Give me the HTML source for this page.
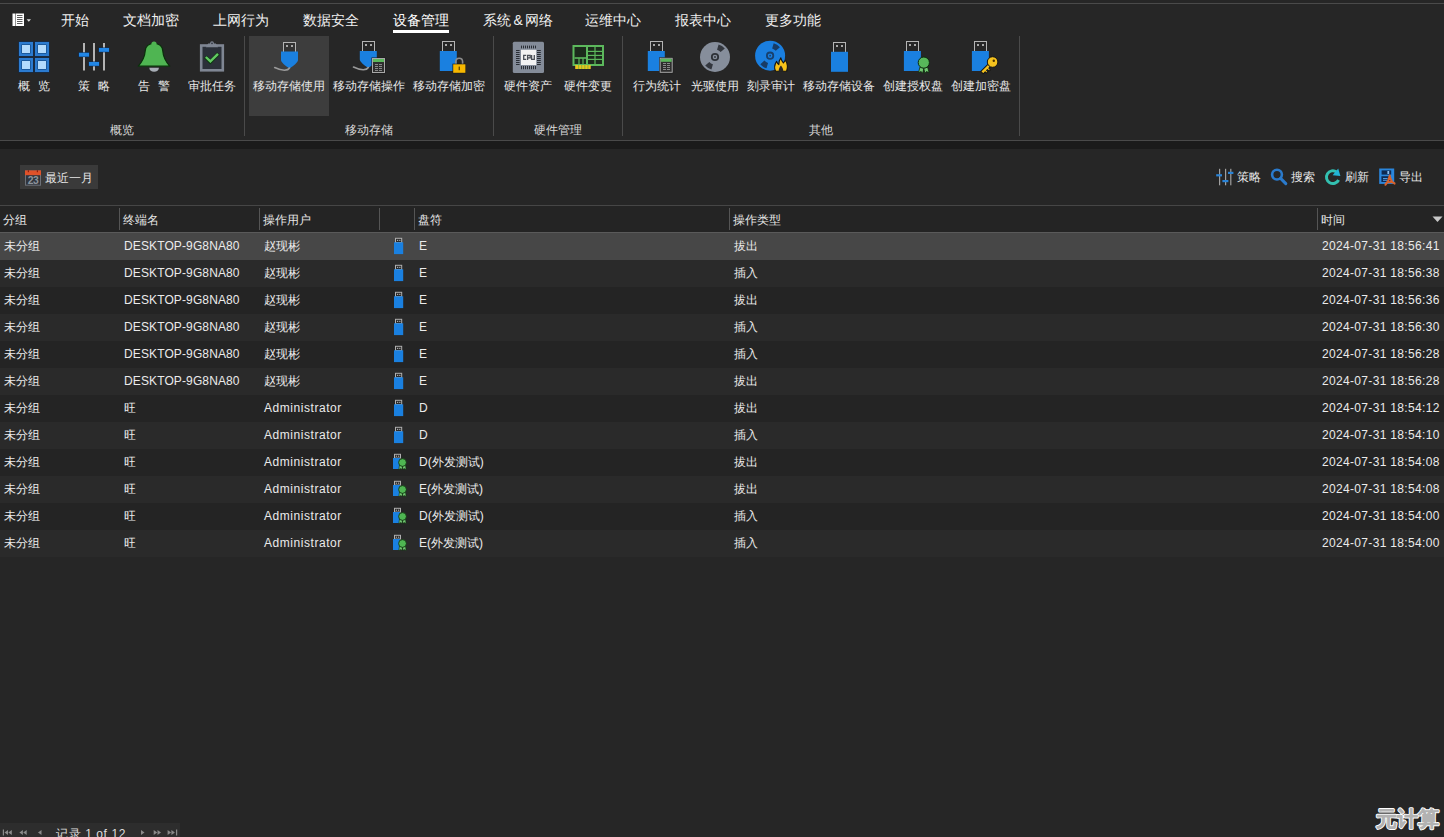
<!DOCTYPE html>
<html><head><meta charset="utf-8">
<style>
*{margin:0;padding:0;box-sizing:border-box}
html,body{width:1444px;height:837px;overflow:hidden;background:#262626}
body{position:relative;font-family:"Liberation Sans",sans-serif;color:#e6e6e6;font-size:12px}
.a{position:absolute}
.t{position:absolute;white-space:nowrap;line-height:16px;font-size:12px}
.tab{position:absolute;white-space:nowrap;line-height:16px;font-size:14px;top:12px;color:#f0f0f0}
.lbl{position:absolute;white-space:nowrap;line-height:16px;font-size:12px;top:78px;color:#e8e8e8}
.grp{position:absolute;white-space:nowrap;line-height:16px;font-size:12px;top:122px;color:#d8d8d8}
.vsep{position:absolute;top:36px;height:100px;width:1px;background:#4a4a4a}
.hsep{position:absolute;top:208px;height:22px;width:1px;background:#555}
.row{position:absolute;left:0;width:1444px;height:27px}
.row .t{top:5px;color:#ebebeb}
svg{position:absolute;overflow:visible}
</style></head><body>
<!-- top strip -->
<div class="a" style="left:0;top:3px;width:1444px;height:1px;background:#4a4a4a"></div>

<!-- app menu icon -->
<svg style="left:12px;top:13px" width="20" height="14" viewBox="0 0 20 14">
<rect x="0.5" y="0.5" width="2.5" height="12.5" fill="#fff"/>
<rect x="3.5" y="0.5" width="8.5" height="12.5" fill="#fff"/>
<rect x="5" y="2.2" width="5.5" height="0.8" fill="#333"/>
<rect x="5" y="4.2" width="5.5" height="0.8" fill="#333"/>
<rect x="5" y="6.2" width="5.5" height="0.8" fill="#333"/>
<rect x="5" y="8.2" width="5.5" height="0.8" fill="#333"/>
<rect x="5" y="10.2" width="5.5" height="0.8" fill="#333"/>
<path d="M14.6 6.2 L19 6.2 L16.8 8.8 Z" fill="#ddd"/>
</svg>

<!-- tabs -->
<div class="tab" style="left:61px">开始</div>
<div class="tab" style="left:123px">文档加密</div>
<div class="tab" style="left:213px">上网行为</div>
<div class="tab" style="left:303px">数据安全</div>
<div class="tab" style="left:393px;color:#fff">设备管理</div>
<div class="a" style="left:393px;top:30px;width:56px;height:3px;background:#fff"></div>
<div class="tab" style="left:483px">系统<span style="margin:0 2px 0 2.5px">&amp;</span>网络</div>
<div class="tab" style="left:585px">运维中心</div>
<div class="tab" style="left:675px">报表中心</div>
<div class="tab" style="left:765px">更多功能</div>

<!-- ribbon -->
<div class="a" style="left:249px;top:36px;width:80px;height:80px;background:#3d3d3d"></div>
<div class="vsep" style="left:244px"></div>
<div class="vsep" style="left:493px"></div>
<div class="vsep" style="left:622px"></div>
<div class="vsep" style="left:1019px"></div>

<div class="lbl" style="left:18px">概</div><div class="lbl" style="left:38px">览</div>
<div class="lbl" style="left:78px">策</div><div class="lbl" style="left:98px">略</div>
<div class="lbl" style="left:138px">告</div><div class="lbl" style="left:158px">警</div>
<div class="lbl" style="left:188px">审批任务</div>
<div class="lbl" style="left:253px">移动存储使用</div>
<div class="lbl" style="left:333px">移动存储操作</div>
<div class="lbl" style="left:413px">移动存储加密</div>
<div class="lbl" style="left:504px">硬件资产</div>
<div class="lbl" style="left:564px">硬件变更</div>
<div class="lbl" style="left:633px">行为统计</div>
<div class="lbl" style="left:691px">光驱使用</div>
<div class="lbl" style="left:747px">刻录审计</div>
<div class="lbl" style="left:803px">移动存储设备</div>
<div class="lbl" style="left:883px">创建授权盘</div>
<div class="lbl" style="left:951px">创建加密盘</div>

<div class="grp" style="left:110px">概览</div>
<div class="grp" style="left:345px">移动存储</div>
<div class="grp" style="left:534px">硬件管理</div>
<div class="grp" style="left:809px">其他</div>

<!-- ICONS -->

<!-- ribbon bottom -->
<div class="a" style="left:0;top:140px;width:1444px;height:1px;background:#4a4a4a"></div>
<div class="a" style="left:0;top:141px;width:1444px;height:8px;background:#1b1b1b"></div>

<!-- toolbar -->
<div class="a" style="left:20px;top:165px;width:78px;height:24px;background:#3a3a3a"></div>
<div class="t" style="left:45px;top:170px">最近一月</div>
<div class="t" style="left:1237px;top:169px">策略</div>
<div class="t" style="left:1291px;top:169px">搜索</div>
<div class="t" style="left:1345px;top:169px">刷新</div>
<div class="t" style="left:1399px;top:169px">导出</div>

<!-- table header -->
<div class="a" style="left:0;top:205px;width:1444px;height:1px;background:#464646"></div>
<div class="a" style="left:0;top:206px;width:1444px;height:26px;background:#242424"></div>
<div class="a" style="left:0;top:232px;width:1444px;height:1px;background:#5a5a5a"></div>
<div class="hsep" style="left:119px"></div>
<div class="hsep" style="left:259px"></div>
<div class="hsep" style="left:379px"></div>
<div class="hsep" style="left:414px"></div>
<div class="hsep" style="left:729px"></div>
<div class="hsep" style="left:1317px"></div>
<div class="t" style="left:3px;top:212px">分组</div>
<div class="t" style="left:123px;top:212px">终端名</div>
<div class="t" style="left:263px;top:212px">操作用户</div>
<div class="t" style="left:418px;top:212px">盘符</div>
<div class="t" style="left:733px;top:212px">操作类型</div>
<div class="t" style="left:1321px;top:212px">时间</div>
<svg style="left:1432px;top:216px" width="11" height="7"><path d="M0.5 0.5 L10.5 0.5 L5.5 6 Z" fill="#c8c8c8"/></svg>

<div class="row" style="top:233px;background:#474747"><div class="t" style="left:4px">未分组</div><div class="t" style="left:124px;letter-spacing:0.12px">DESKTOP-9G8NA80</div><div class="t" style="left:264px">赵现彬</div><i class="ru"></i><div class="t" style="left:419px">E</div><div class="t" style="left:734px">拔出</div><div class="t" style="left:1322px;letter-spacing:0.33px">2024-07-31 18:56:41</div></div>
<div class="row" style="top:260px;background:#2a2a2a"><div class="t" style="left:4px">未分组</div><div class="t" style="left:124px;letter-spacing:0.12px">DESKTOP-9G8NA80</div><div class="t" style="left:264px">赵现彬</div><i class="ru"></i><div class="t" style="left:419px">E</div><div class="t" style="left:734px">插入</div><div class="t" style="left:1322px;letter-spacing:0.33px">2024-07-31 18:56:38</div></div>
<div class="row" style="top:287px;background:#242424"><div class="t" style="left:4px">未分组</div><div class="t" style="left:124px;letter-spacing:0.12px">DESKTOP-9G8NA80</div><div class="t" style="left:264px">赵现彬</div><i class="ru"></i><div class="t" style="left:419px">E</div><div class="t" style="left:734px">拔出</div><div class="t" style="left:1322px;letter-spacing:0.33px">2024-07-31 18:56:36</div></div>
<div class="row" style="top:314px;background:#2a2a2a"><div class="t" style="left:4px">未分组</div><div class="t" style="left:124px;letter-spacing:0.12px">DESKTOP-9G8NA80</div><div class="t" style="left:264px">赵现彬</div><i class="ru"></i><div class="t" style="left:419px">E</div><div class="t" style="left:734px">插入</div><div class="t" style="left:1322px;letter-spacing:0.33px">2024-07-31 18:56:30</div></div>
<div class="row" style="top:341px;background:#242424"><div class="t" style="left:4px">未分组</div><div class="t" style="left:124px;letter-spacing:0.12px">DESKTOP-9G8NA80</div><div class="t" style="left:264px">赵现彬</div><i class="ru"></i><div class="t" style="left:419px">E</div><div class="t" style="left:734px">插入</div><div class="t" style="left:1322px;letter-spacing:0.33px">2024-07-31 18:56:28</div></div>
<div class="row" style="top:368px;background:#2a2a2a"><div class="t" style="left:4px">未分组</div><div class="t" style="left:124px;letter-spacing:0.12px">DESKTOP-9G8NA80</div><div class="t" style="left:264px">赵现彬</div><i class="ru"></i><div class="t" style="left:419px">E</div><div class="t" style="left:734px">拔出</div><div class="t" style="left:1322px;letter-spacing:0.33px">2024-07-31 18:56:28</div></div>
<div class="row" style="top:395px;background:#242424"><div class="t" style="left:4px">未分组</div><div class="t" style="left:124px">旺</div><div class="t" style="left:264px;letter-spacing:0.55px">Administrator</div><i class="ru"></i><div class="t" style="left:419px">D</div><div class="t" style="left:734px">拔出</div><div class="t" style="left:1322px;letter-spacing:0.33px">2024-07-31 18:54:12</div></div>
<div class="row" style="top:422px;background:#2a2a2a"><div class="t" style="left:4px">未分组</div><div class="t" style="left:124px">旺</div><div class="t" style="left:264px;letter-spacing:0.55px">Administrator</div><i class="ru"></i><div class="t" style="left:419px">D</div><div class="t" style="left:734px">插入</div><div class="t" style="left:1322px;letter-spacing:0.33px">2024-07-31 18:54:10</div></div>
<div class="row" style="top:449px;background:#242424"><div class="t" style="left:4px">未分组</div><div class="t" style="left:124px">旺</div><div class="t" style="left:264px;letter-spacing:0.55px">Administrator</div><i class="rb"></i><div class="t" style="left:419px">D(外发测试)</div><div class="t" style="left:734px">拔出</div><div class="t" style="left:1322px;letter-spacing:0.33px">2024-07-31 18:54:08</div></div>
<div class="row" style="top:476px;background:#2a2a2a"><div class="t" style="left:4px">未分组</div><div class="t" style="left:124px">旺</div><div class="t" style="left:264px;letter-spacing:0.55px">Administrator</div><i class="rb"></i><div class="t" style="left:419px">E(外发测试)</div><div class="t" style="left:734px">拔出</div><div class="t" style="left:1322px;letter-spacing:0.33px">2024-07-31 18:54:08</div></div>
<div class="row" style="top:503px;background:#242424"><div class="t" style="left:4px">未分组</div><div class="t" style="left:124px">旺</div><div class="t" style="left:264px;letter-spacing:0.55px">Administrator</div><i class="rb"></i><div class="t" style="left:419px">D(外发测试)</div><div class="t" style="left:734px">插入</div><div class="t" style="left:1322px;letter-spacing:0.33px">2024-07-31 18:54:00</div></div>
<div class="row" style="top:530px;background:#2a2a2a"><div class="t" style="left:4px">未分组</div><div class="t" style="left:124px">旺</div><div class="t" style="left:264px;letter-spacing:0.55px">Administrator</div><i class="rb"></i><div class="t" style="left:419px">E(外发测试)</div><div class="t" style="left:734px">插入</div><div class="t" style="left:1322px;letter-spacing:0.33px">2024-07-31 18:54:00</div></div>

<!-- pager -->
<div class="a" style="left:0;top:823px;width:180px;height:14px;background:#2d2d2d"></div>
<div class="t" style="left:56px;top:826px;color:#ddd;letter-spacing:0.6px">记录 1 of 12</div>

<svg style="left:0;top:0" width="1444" height="837" viewBox="0 0 1444 837"><rect x="18.5" y="41.5" width="15" height="15" fill="#0b2f5c"/><rect x="19" y="42" width="14" height="14" fill="#2b7bd0"/><rect x="21.5" y="44.5" width="9" height="9" fill="#0d3a6c"/><rect x="22" y="45" width="8" height="8" fill="#b3dbfd"/><rect x="18.5" y="57.5" width="15" height="15" fill="#0b2f5c"/><rect x="19" y="58" width="14" height="14" fill="#2b7bd0"/><rect x="21.5" y="60.5" width="9" height="9" fill="#0d3a6c"/><rect x="22" y="61" width="8" height="8" fill="#b3dbfd"/><rect x="34.5" y="41.5" width="15" height="15" fill="#0b2f5c"/><rect x="35" y="42" width="14" height="14" fill="#2b7bd0"/><rect x="37.5" y="44.5" width="9" height="9" fill="#0d3a6c"/><rect x="38" y="45" width="8" height="8" fill="#b3dbfd"/><rect x="34.5" y="57.5" width="15" height="15" fill="#0b2f5c"/><rect x="35" y="58" width="14" height="14" fill="#2b7bd0"/><rect x="37.5" y="60.5" width="9" height="9" fill="#0d3a6c"/><rect x="38" y="61" width="8" height="8" fill="#b3dbfd"/><rect x="83" y="43" width="2" height="27.5" fill="#b4b4b4"/><rect x="93" y="43" width="2" height="27.5" fill="#b4b4b4"/><rect x="103" y="43" width="2" height="27.5" fill="#b4b4b4"/><rect x="78.5" y="52.3" width="11" height="4.8" fill="#0b2f5c"/><rect x="79" y="52.8" width="10" height="3.8" fill="#2186e6"/><rect x="88.5" y="61.5" width="11" height="4.8" fill="#0b2f5c"/><rect x="89" y="62" width="10" height="3.8" fill="#2186e6"/><rect x="98.5" y="47.5" width="11" height="4.8" fill="#0b2f5c"/><rect x="99" y="48" width="10" height="3.8" fill="#2186e6"/><path d="M138.3 66.2 C141.5 62.4 144.8 58 145.2 51 C145.6 46 149 43.5 154 43.5 C159 43.5 162.4 46 162.8 51 C163.2 58 166.5 62.4 169.7 66.2 Z" fill="#4fb552" stroke="#0a300b" stroke-width="1.2" stroke-linejoin="round"/><circle cx="154" cy="44" r="2.6" fill="#4fb552"/><path d="M149.3 67.8 H158.9 C158.9 70.3 156.8 71.8 154.1 71.8 C151.4 71.8 149.3 70.3 149.3 67.8 Z" fill="#a7adb5"/><rect x="201.2" y="45.5" width="21.6" height="24.8" fill="#2b3039" stroke="#7f8693" stroke-width="2.6"/><path d="M205.8 47.2 L208.2 43.6 H215.8 L218.2 47.2 Z" fill="#7f8693"/><circle cx="212" cy="43.2" r="1.9" fill="#7f8693"/><circle cx="212" cy="43.4" r="0.8" fill="#2b3039"/><path d="M205.4 56.8 L210.4 61.8 L218.4 53.6" fill="none" stroke="#0d3a10" stroke-width="3.8"/><path d="M205.8 57 L210.4 61.4 L218 53.8" fill="none" stroke="#62c963" stroke-width="2.4"/><rect x="283.5" y="42.5" width="12" height="10" fill="#333" stroke="#b4b4b4" stroke-width="1"/><rect x="286.0" y="45.0" width="2" height="2" fill="#a8a8a8"/><rect x="291.0" y="45.0" width="2" height="2" fill="#a8a8a8"/><path d="M281 51.5 H298 V60.0 C298 62.5 293 66.0 290.6 67.8 Q289.5 68.5 288.4 67.8 C286 66.0 281 62.5 281 60.0 Z" fill="#1a80e0"/><path d="M289.5 68.0 C288 70.5 283 71.5 274.7 67.5" fill="none" stroke="#9a9a9a" stroke-width="1.6" stroke-linecap="round"/><rect x="362.5" y="41.5" width="12" height="10" fill="#262626" stroke="#b4b4b4" stroke-width="1"/><rect x="365.0" y="44.0" width="2" height="2" fill="#a8a8a8"/><rect x="370.0" y="44.0" width="2" height="2" fill="#a8a8a8"/><path d="M359.8 51 H376.8 V59.5 C376.8 62 371.8 65.5 369.40000000000003 67.3 Q368.3 68 367.2 67.3 C364.8 65.5 359.8 62 359.8 59.5 Z" fill="#1a80e0"/><path d="M368.3 67.5 C366.8 70 361.8 71 353.5 67" fill="none" stroke="#9a9a9a" stroke-width="1.6" stroke-linecap="round"/><rect x="371.5" y="57.5" width="14" height="16" fill="#1a1a1a"/><rect x="372.5" y="58.5" width="12" height="14" fill="#2e2e2e" stroke="#a8a8a8" stroke-width="1"/><rect x="373" y="59" width="11" height="3" fill="#5cb85c"/><rect x="375" y="64" width="3" height="1" fill="#8a8a8a"/><rect x="379" y="64" width="3" height="1" fill="#8a8a8a"/><rect x="375" y="66" width="3" height="1" fill="#8a8a8a"/><rect x="379" y="66" width="3" height="1" fill="#8a8a8a"/><rect x="375" y="68" width="3" height="1" fill="#8a8a8a"/><rect x="379" y="68" width="3" height="1" fill="#8a8a8a"/><rect x="375" y="70" width="3" height="1" fill="#8a8a8a"/><rect x="379" y="70" width="3" height="1" fill="#8a8a8a"/><rect x="442.5" y="41.5" width="12" height="10" fill="#262626" stroke="#b4b4b4" stroke-width="1"/><rect x="445.0" y="44.0" width="2" height="2" fill="#a8a8a8"/><rect x="450.0" y="44.0" width="2" height="2" fill="#a8a8a8"/><rect x="439.8" y="51" width="17" height="20" fill="#1a80e0"/><path d="M455.8 64.5 V61.8 C455.8 59.5 457.2 58.3 459.2 58.3 C461.2 58.3 462.6 59.5 462.6 61.8 V64.5" fill="none" stroke="#8c8c8c" stroke-width="1.6"/><rect x="452.5" y="63.7" width="13.5" height="9.6" fill="#1a1a1a"/><rect x="453.2" y="64.3" width="12.2" height="8.5" fill="#f6b700"/><rect x="458.6" y="66.6" width="1.4" height="3.6" fill="#6a4b00"/><rect x="512.8" y="41.8" width="31.2" height="31.2" rx="1.5" fill="#848c99"/><rect x="521" y="45.6" width="1" height="2.8" fill="#2a2e35"/><rect x="521" y="66" width="1" height="3.2" fill="#2a2e35"/><rect x="516" y="50" width="3.6" height="1" fill="#2a2e35"/><rect x="537" y="50" width="3.8" height="1" fill="#2a2e35"/><rect x="523" y="45.6" width="1" height="2.8" fill="#2a2e35"/><rect x="523" y="66" width="1" height="3.2" fill="#2a2e35"/><rect x="516" y="52" width="3.6" height="1" fill="#2a2e35"/><rect x="537" y="52" width="3.8" height="1" fill="#2a2e35"/><rect x="525" y="45.6" width="1" height="2.8" fill="#2a2e35"/><rect x="525" y="66" width="1" height="3.2" fill="#2a2e35"/><rect x="516" y="54" width="3.6" height="1" fill="#2a2e35"/><rect x="537" y="54" width="3.8" height="1" fill="#2a2e35"/><rect x="527" y="45.6" width="1" height="2.8" fill="#2a2e35"/><rect x="527" y="66" width="1" height="3.2" fill="#2a2e35"/><rect x="516" y="56" width="3.6" height="1" fill="#2a2e35"/><rect x="537" y="56" width="3.8" height="1" fill="#2a2e35"/><rect x="529" y="45.6" width="1" height="2.8" fill="#2a2e35"/><rect x="529" y="66" width="1" height="3.2" fill="#2a2e35"/><rect x="516" y="58" width="3.6" height="1" fill="#2a2e35"/><rect x="537" y="58" width="3.8" height="1" fill="#2a2e35"/><rect x="531" y="45.6" width="1" height="2.8" fill="#2a2e35"/><rect x="531" y="66" width="1" height="3.2" fill="#2a2e35"/><rect x="516" y="60" width="3.6" height="1" fill="#2a2e35"/><rect x="537" y="60" width="3.8" height="1" fill="#2a2e35"/><rect x="533" y="45.6" width="1" height="2.8" fill="#2a2e35"/><rect x="533" y="66" width="1" height="3.2" fill="#2a2e35"/><rect x="516" y="62" width="3.6" height="1" fill="#2a2e35"/><rect x="537" y="62" width="3.8" height="1" fill="#2a2e35"/><rect x="535" y="45.6" width="1" height="2.8" fill="#2a2e35"/><rect x="535" y="66" width="1" height="3.2" fill="#2a2e35"/><rect x="516" y="64" width="3.6" height="1" fill="#2a2e35"/><rect x="537" y="64" width="3.8" height="1" fill="#2a2e35"/><rect x="521" y="49.8" width="15.2" height="15.2" fill="#f2f2f2"/><path d="M526.2 55.4 H523.7 V59.3 H526.2 M527.6 60 V55.4 H530.2 V57.8 H527.6 M531.6 55 V59.3 H534.3 V55" fill="none" stroke="#4a4f57" stroke-width="1.3"/><rect x="573.5" y="46" width="29.5" height="19" fill="#1c2a1c" stroke="#5cb85c" stroke-width="2"/><rect x="586" y="46" width="2" height="19" fill="#5cb85c"/><rect x="574.5" y="57.2" width="12" height="1.6" fill="#5cb85c"/><rect x="578.4" y="58" width="1.2" height="6" fill="#5cb85c"/><rect x="582.4" y="58" width="1.2" height="6" fill="#5cb85c"/><rect x="594.4" y="46" width="1.2" height="19" fill="#5cb85c"/><rect x="588" y="50.8" width="14" height="1.2" fill="#5cb85c"/><rect x="588" y="54.8" width="14" height="1.2" fill="#5cb85c"/><rect x="588" y="58.8" width="14" height="1.2" fill="#5cb85c"/><rect x="575.2" y="65" width="15.5" height="4" fill="#e6c51e"/><rect x="578.2" y="65" width="0.9" height="4" fill="#7fb23a"/><rect x="581.3" y="65" width="0.9" height="4" fill="#7fb23a"/><rect x="584.4" y="65" width="0.9" height="4" fill="#7fb23a"/><rect x="587.5" y="65" width="0.9" height="4" fill="#7fb23a"/><rect x="650.5" y="41.5" width="12" height="10" fill="#262626" stroke="#b4b4b4" stroke-width="1"/><rect x="653.0" y="44.0" width="2" height="2" fill="#a8a8a8"/><rect x="658.0" y="44.0" width="2" height="2" fill="#a8a8a8"/><rect x="647.8" y="51" width="17" height="20" fill="#1a80e0"/><rect x="659.2" y="57.3" width="14" height="16" fill="#1a1a1a"/><rect x="660.2" y="58.3" width="12" height="14" fill="#2e2e2e" stroke="#a8a8a8" stroke-width="1"/><rect x="660.7" y="58.8" width="11" height="3" fill="#5cb85c"/><rect x="663" y="63" width="3" height="1" fill="#8a8a8a"/><rect x="667" y="63" width="3" height="1" fill="#8a8a8a"/><rect x="663" y="65" width="3" height="1" fill="#8a8a8a"/><rect x="667" y="65" width="3" height="1" fill="#8a8a8a"/><rect x="663" y="67" width="3" height="1" fill="#8a8a8a"/><rect x="667" y="67" width="3" height="1" fill="#8a8a8a"/><rect x="663" y="69" width="3" height="1" fill="#8a8a8a"/><rect x="667" y="69" width="3" height="1" fill="#8a8a8a"/><circle cx="715" cy="57" r="15" fill="#868e9b"/><path d="M717.07 49.79 L718.58 44.50 A13 13 0 0 1 724.81 48.47 L720.66 52.08 A7.5 7.5 0 0 0 717.07 49.79 Z" fill="#33373e"/><path d="M712.93 64.21 L711.42 69.50 A13 13 0 0 1 705.19 65.53 L709.34 61.92 A7.5 7.5 0 0 0 712.93 64.21 Z" fill="#33373e"/><circle cx="715" cy="57" r="3.2" fill="none" stroke="#2e3238" stroke-width="1.8"/><circle cx="715" cy="57" r="0.9" fill="#2e3238"/><circle cx="770.1" cy="55.7" r="15" fill="#1a7fe0"/><path d="M772.17 48.49 L773.68 43.20 A13 13 0 0 1 779.91 47.17 L775.76 50.78 A7.5 7.5 0 0 0 772.17 48.49 Z" fill="#183c66"/><path d="M768.03 62.91 L766.52 68.20 A13 13 0 0 1 760.29 64.23 L764.44 60.62 A7.5 7.5 0 0 0 768.03 62.91 Z" fill="#183c66"/><circle cx="770.1" cy="55.7" r="3.2" fill="none" stroke="#17406e" stroke-width="1.8"/><circle cx="770.1" cy="55.7" r="0.9" fill="#17406e"/><path d="M775.6 71.2 C774.2 68.5 774.6 64.5 776.6 61.4 C777.2 63 777.8 64 778.8 64.6 C778.8 61.6 779.6 59.4 780.8 57.8 C781.4 60 782.4 61.8 783.4 63 C783.8 62 784.6 61 785.8 60.4 C787.4 63.4 788 67.2 786.6 71.2 Z" fill="#f6c21a" stroke="#141414" stroke-width="1.1" stroke-linejoin="round"/><path d="M778.8 71.6 C778.4 69.4 779.4 67 781 65.4 C782.4 67.2 783.6 69.4 783.2 71.6 Z" fill="#262626"/><rect x="833.5" y="42.5" width="12" height="10" fill="#262626" stroke="#b4b4b4" stroke-width="1"/><rect x="836.0" y="45.0" width="2" height="2" fill="#a8a8a8"/><rect x="841.0" y="45.0" width="2" height="2" fill="#a8a8a8"/><rect x="831" y="51.8" width="17" height="20" fill="#1a80e0"/><rect x="906.5" y="41.5" width="12" height="10" fill="#262626" stroke="#b4b4b4" stroke-width="1"/><rect x="909.0" y="44.0" width="2" height="2" fill="#a8a8a8"/><rect x="914.0" y="44.0" width="2" height="2" fill="#a8a8a8"/><rect x="903.9" y="51" width="17" height="20" fill="#1a80e0"/><path d="M920 67 L918.5 72.6 L921.2 71.5 L922.6 73.4 L924 68 Z" fill="#72c872" stroke="#0d2a0d" stroke-width="0.8"/><path d="M927.6 67 L929.1 72.6 L926.4 71.5 L925 73.4 L923.6 68 Z" fill="#72c872" stroke="#0d2a0d" stroke-width="0.8"/><circle cx="923.8" cy="62.6" r="5.6" fill="#58b85a" stroke="#0d2a0d" stroke-width="1"/><rect x="974.5" y="41.5" width="12" height="10" fill="#262626" stroke="#b4b4b4" stroke-width="1"/><rect x="977.0" y="44.0" width="2" height="2" fill="#a8a8a8"/><rect x="982.0" y="44.0" width="2" height="2" fill="#a8a8a8"/><rect x="971.9" y="51" width="17" height="20" fill="#1a80e0"/><g transform="rotate(-45 992.6 62)"><path d="M977.6 60.3 H988 V63.7 H985.6 V66 H983.6 V63.7 H982.4 V65.6 H980.4 V63.7 H977.6 Z" fill="#f5c21e" stroke="#141414" stroke-width="1" stroke-linejoin="round"/></g><circle cx="992.6" cy="62" r="5.3" fill="#f5c21e" stroke="#141414" stroke-width="1"/><circle cx="993.8" cy="60.8" r="1.2" fill="#4a3000"/><rect x="25.5" y="171" width="15" height="14.2" fill="#30353d" stroke="#6d7178" stroke-width="1"/><rect x="25" y="170.4" width="16" height="4.8" fill="#e0522a"/><rect x="27.8" y="170.2" width="1.2" height="2" fill="#8a2010"/><rect x="36.8" y="170.2" width="1.2" height="2" fill="#8a2010"/><text x="32.9" y="184.2" text-anchor="middle" font-family="Liberation Sans" font-size="10.4" font-weight="bold" fill="#8e949c" letter-spacing="-0.7">23</text><rect x="1219" y="168.8" width="1.2" height="16.5" fill="#a0a0a0"/><rect x="1225" y="168.8" width="1.2" height="16.5" fill="#a0a0a0"/><rect x="1230.2" y="168.8" width="1.2" height="16.5" fill="#a0a0a0"/><rect x="1216.2" y="174.2" width="5.8" height="2.2" fill="#2a84d8"/><rect x="1222.4" y="180" width="6" height="2.2" fill="#2a84d8"/><rect x="1228" y="171.8" width="5.4" height="2.2" fill="#2a84d8"/><circle cx="1277" cy="174.6" r="4.9" fill="none" stroke="#2a7acc" stroke-width="2.6"/><path d="M1280.6 178.4 L1285.8 183.6" stroke="#2a7acc" stroke-width="3" stroke-linecap="round"/><path d="M1336.6 172 A6.4 6.4 0 1 0 1338.6 180" fill="none" stroke="#33c0b0" stroke-width="3"/><path d="M1338.2 168.4 L1340.4 176 L1332.6 175.2 Z" fill="#22b4d6"/><rect x="1379.2" y="168.5" width="15" height="15.4" fill="#2a86dc"/><rect x="1381.6" y="170.4" width="9.6" height="4.2" fill="#0f2a52"/><rect x="1387.4" y="171" width="1.8" height="3" fill="#8cc0f4"/><rect x="1381.4" y="176.2" width="9.4" height="5.8" fill="#0f2a52"/><rect x="1383" y="178" width="4.6" height="0.9" fill="#5aa8f0"/><rect x="1383" y="179.8" width="4.6" height="0.9" fill="#5aa8f0"/><path d="M1389.7 175.6 C1389.2 179.4 1387.4 182.6 1385.4 184.8 M1389.7 175.6 C1390.4 179.6 1392.4 182.6 1394.6 183.6 M1385.6 183.8 C1388.4 181.6 1391.6 181.8 1394.4 183.2" fill="none" stroke="#d8622c" stroke-width="2" stroke-linecap="round"/><rect x="2.8" y="829.5" width="1.2" height="6" fill="#8a8a8a"/><path d="M4.5 832.5 L8.0 830.0 L8.0 835.0 Z" fill="#8a8a8a"/><path d="M8.3 832.5 L11.8 830.0 L11.8 835.0 Z" fill="#8a8a8a"/><path d="M19.4 832.5 L22.9 830.0 L22.9 835.0 Z" fill="#8a8a8a"/><path d="M23.2 832.5 L26.7 830.0 L26.7 835.0 Z" fill="#8a8a8a"/><path d="M38 832.5 L41.5 830.0 L41.5 835.0 Z" fill="#8a8a8a"/><path d="M144.5 832.5 L141 830.0 L141 835.0 Z" fill="#8a8a8a"/><path d="M157.2 832.5 L153.7 830.0 L153.7 835.0 Z" fill="#8a8a8a"/><path d="M161.0 832.5 L157.5 830.0 L157.5 835.0 Z" fill="#8a8a8a"/><path d="M171.1 832.5 L167.6 830.0 L167.6 835.0 Z" fill="#8a8a8a"/><path d="M174.9 832.5 L171.4 830.0 L171.4 835.0 Z" fill="#8a8a8a"/><rect x="176" y="829.5" width="1.2" height="6" fill="#8a8a8a"/><rect x="395.5" y="238.3" width="6.2" height="4.2" fill="#2a2a2a" stroke="#b0b0b0" stroke-width="1"/><rect x="397" y="239.8" width="1.2" height="1.2" fill="#aaa"/><rect x="399.2" y="239.8" width="1.2" height="1.2" fill="#aaa"/><rect x="394" y="242.3" width="9.2" height="11.8" fill="#1a80e0"/><rect x="395.5" y="265.3" width="6.2" height="4.2" fill="#2a2a2a" stroke="#b0b0b0" stroke-width="1"/><rect x="397" y="266.8" width="1.2" height="1.2" fill="#aaa"/><rect x="399.2" y="266.8" width="1.2" height="1.2" fill="#aaa"/><rect x="394" y="269.3" width="9.2" height="11.8" fill="#1a80e0"/><rect x="395.5" y="292.3" width="6.2" height="4.2" fill="#2a2a2a" stroke="#b0b0b0" stroke-width="1"/><rect x="397" y="293.8" width="1.2" height="1.2" fill="#aaa"/><rect x="399.2" y="293.8" width="1.2" height="1.2" fill="#aaa"/><rect x="394" y="296.3" width="9.2" height="11.8" fill="#1a80e0"/><rect x="395.5" y="319.3" width="6.2" height="4.2" fill="#2a2a2a" stroke="#b0b0b0" stroke-width="1"/><rect x="397" y="320.8" width="1.2" height="1.2" fill="#aaa"/><rect x="399.2" y="320.8" width="1.2" height="1.2" fill="#aaa"/><rect x="394" y="323.3" width="9.2" height="11.8" fill="#1a80e0"/><rect x="395.5" y="346.3" width="6.2" height="4.2" fill="#2a2a2a" stroke="#b0b0b0" stroke-width="1"/><rect x="397" y="347.8" width="1.2" height="1.2" fill="#aaa"/><rect x="399.2" y="347.8" width="1.2" height="1.2" fill="#aaa"/><rect x="394" y="350.3" width="9.2" height="11.8" fill="#1a80e0"/><rect x="395.5" y="373.3" width="6.2" height="4.2" fill="#2a2a2a" stroke="#b0b0b0" stroke-width="1"/><rect x="397" y="374.8" width="1.2" height="1.2" fill="#aaa"/><rect x="399.2" y="374.8" width="1.2" height="1.2" fill="#aaa"/><rect x="394" y="377.3" width="9.2" height="11.8" fill="#1a80e0"/><rect x="395.5" y="400.3" width="6.2" height="4.2" fill="#2a2a2a" stroke="#b0b0b0" stroke-width="1"/><rect x="397" y="401.8" width="1.2" height="1.2" fill="#aaa"/><rect x="399.2" y="401.8" width="1.2" height="1.2" fill="#aaa"/><rect x="394" y="404.3" width="9.2" height="11.8" fill="#1a80e0"/><rect x="395.5" y="427.3" width="6.2" height="4.2" fill="#2a2a2a" stroke="#b0b0b0" stroke-width="1"/><rect x="397" y="428.8" width="1.2" height="1.2" fill="#aaa"/><rect x="399.2" y="428.8" width="1.2" height="1.2" fill="#aaa"/><rect x="394" y="431.3" width="9.2" height="11.8" fill="#1a80e0"/><rect x="394.5" y="454.3" width="6" height="3.8" fill="#2a2a2a" stroke="#b0b0b0" stroke-width="1"/><rect x="395.8" y="455.6" width="1.2" height="1.2" fill="#aaa"/><rect x="398" y="455.6" width="1.2" height="1.2" fill="#aaa"/><rect x="393" y="458" width="7" height="11" fill="#1a80e0"/><path d="M399.5 465 L398.8 469.4 L400.8 468.6 L402 469.6 L402.6 466 Z M405.5 465 L406.2 469.4 L404.2 468.6 L403 469.6 L402.4 466 Z" fill="#72c872" stroke="#0d2a0d" stroke-width="0.6"/><circle cx="402.5" cy="462.5" r="3.9" fill="#4fb552" stroke="#0d2a0d" stroke-width="0.8"/><rect x="394.5" y="481.3" width="6" height="3.8" fill="#2a2a2a" stroke="#b0b0b0" stroke-width="1"/><rect x="395.8" y="482.6" width="1.2" height="1.2" fill="#aaa"/><rect x="398" y="482.6" width="1.2" height="1.2" fill="#aaa"/><rect x="393" y="485" width="7" height="11" fill="#1a80e0"/><path d="M399.5 492 L398.8 496.4 L400.8 495.6 L402 496.6 L402.6 493 Z M405.5 492 L406.2 496.4 L404.2 495.6 L403 496.6 L402.4 493 Z" fill="#72c872" stroke="#0d2a0d" stroke-width="0.6"/><circle cx="402.5" cy="489.5" r="3.9" fill="#4fb552" stroke="#0d2a0d" stroke-width="0.8"/><rect x="394.5" y="508.3" width="6" height="3.8" fill="#2a2a2a" stroke="#b0b0b0" stroke-width="1"/><rect x="395.8" y="509.6" width="1.2" height="1.2" fill="#aaa"/><rect x="398" y="509.6" width="1.2" height="1.2" fill="#aaa"/><rect x="393" y="512" width="7" height="11" fill="#1a80e0"/><path d="M399.5 519 L398.8 523.4 L400.8 522.6 L402 523.6 L402.6 520 Z M405.5 519 L406.2 523.4 L404.2 522.6 L403 523.6 L402.4 520 Z" fill="#72c872" stroke="#0d2a0d" stroke-width="0.6"/><circle cx="402.5" cy="516.5" r="3.9" fill="#4fb552" stroke="#0d2a0d" stroke-width="0.8"/><rect x="394.5" y="535.3" width="6" height="3.8" fill="#2a2a2a" stroke="#b0b0b0" stroke-width="1"/><rect x="395.8" y="536.6" width="1.2" height="1.2" fill="#aaa"/><rect x="398" y="536.6" width="1.2" height="1.2" fill="#aaa"/><rect x="393" y="539" width="7" height="11" fill="#1a80e0"/><path d="M399.5 546 L398.8 550.4 L400.8 549.6 L402 550.6 L402.6 547 Z M405.5 546 L406.2 550.4 L404.2 549.6 L403 550.6 L402.4 547 Z" fill="#72c872" stroke="#0d2a0d" stroke-width="0.6"/><circle cx="402.5" cy="543.5" r="3.9" fill="#4fb552" stroke="#0d2a0d" stroke-width="0.8"/></svg>
<!-- watermark -->
<svg style="left:1360px;top:795px" width="84" height="42"><text x="16" y="31" font-family="Liberation Sans" font-size="21" fill="#fff" stroke="#fff" stroke-width="3.2" stroke-linejoin="round">元计算</text><text x="16" y="31" font-family="Liberation Sans" font-size="21" fill="#b2b2b2" stroke="#b2b2b2" stroke-width="1.3" stroke-linejoin="round">元计算</text></svg>
</body></html>
